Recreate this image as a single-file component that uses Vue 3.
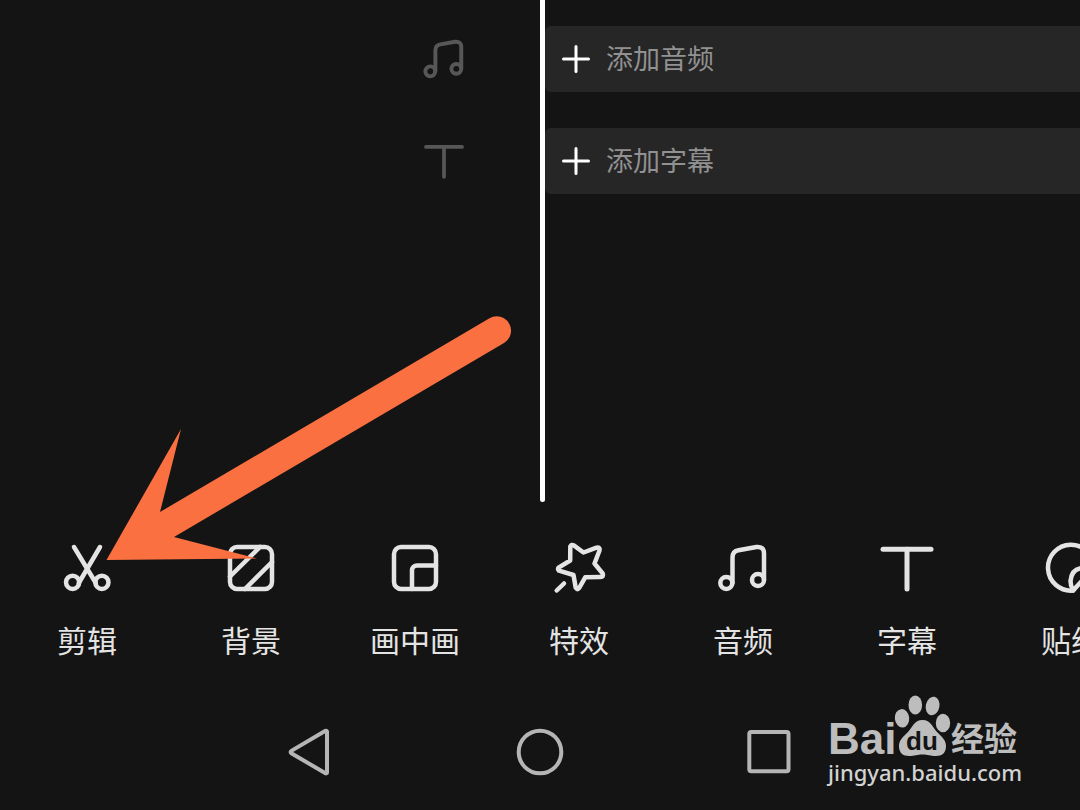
<template>
  <div class="editor">
    <main class="timeline">
      <div class="track-icons">
        <div v-for="track in tracks" :key="track.icon" class="track-icon">
          <svg :class="track.icon" viewBox="0 0 56 56" aria-hidden="true">
            <path v-for="d in icons[track.icon]" :key="d" :d="d" />
          </svg>
        </div>
      </div>
      <div class="playhead"></div>
      <div class="tracks">
        <button v-for="track in tracks" :key="track.label" type="button" class="track">
          <svg viewBox="0 0 30 30" aria-hidden="true"><path d="M15 2.5v25M2.5 15h25" /></svg>
          <span>{{ track.label }}</span>
        </button>
      </div>
    </main>

    <nav class="toolbar">
      <button v-for="tool in tools" :key="tool.label" type="button" class="tool">
        <svg :class="tool.icon" viewBox="0 0 56 56" aria-hidden="true">
          <path v-for="d in icons[tool.icon]" :key="d" :d="d" />
        </svg>
        <span>{{ tool.label }}</span>
      </button>
    </nav>

    <footer class="system-nav">
      <button type="button" aria-label="返回">
        <svg viewBox="0 0 56 56"><path d="M45 7.500v41a1 1 0 0 1-1.500.8L9.300 29.200a1.300 1.300 0 0 1 0-2.300L43.500 6.800a1 1 0 0 1 1.500.7z" /></svg>
      </button>
      <button type="button" aria-label="主屏幕">
        <svg viewBox="0 0 56 56"><circle cx="28" cy="28" r="21.3" /></svg>
      </button>
      <button type="button" aria-label="最近任务">
        <svg viewBox="0 0 56 56"><rect x="7.3" y="8.1" width="39.2" height="39.2" rx="2" /></svg>
      </button>
    </footer>

    <!-- Pointer to the edit tool -->
    <svg class="arrow" viewBox="106 316 406 246" aria-hidden="true">
      <path d="M106.500 560L181 429L160 512L489.500 318.300A14.200 14.200 0 0 1 504 343L174 537L257 558.500z" />
    </svg>

    <div class="watermark">
      <div class="brand">
        <span class="bai">Bai</span>
        <svg viewBox="0 0 58 64" aria-hidden="true">
          <ellipse cx="9" cy="23.3" rx="7.2" ry="9.2" transform="rotate(-6 9 23.3)" />
          <ellipse cx="22.3" cy="10" rx="6.8" ry="9.4" />
          <ellipse cx="39.6" cy="11" rx="6.8" ry="9.4" transform="rotate(12 39.6 11)" />
          <ellipse cx="50" cy="28" rx="7.2" ry="9.2" />
          <path d="M29.500 25C38 25 40 33 44 37C49 42 53 45 53 51C53 58 49 61 43 61C37 61 35 59.500 29.500 59.500C24 59.500 22 61 16 61C10 61 6 58 6 51C6 45 10 42 15 37C19 33 21 25 29.500 25z" />
          <text x="29" y="55" text-anchor="middle">du</text>
        </svg>
        <span class="jingyan">经验</span>
      </div>
      <a href="#">jingyan.baidu.com</a>
    </div>
  </div>
</template>

<script setup>
const tracks = [
  { icon: 'music', label: '添加音频' },
  { icon: 'text', label: '添加字幕' }
]

const tools = [
  { icon: 'scissors', label: '剪辑' },
  { icon: 'background', label: '背景' },
  { icon: 'pip', label: '画中画' },
  { icon: 'effect', label: '特效' },
  { icon: 'music', label: '音频' },
  { icon: 'text', label: '字幕' },
  { icon: 'sticker', label: '贴纸' }
]

const square = 'M14 7h28a7 7 0 0 1 7 7v28a7 7 0 0 1-7 7H14a7 7 0 0 1-7-7V14a7 7 0 0 1 7-7z'

const icons = {
  scissors: [
    'M15 7L36.800 43',
    'M41 7L19.800 43',
    'M7 42.300a6.600 6.600 0 1 0 13.200 0a6.600 6.600 0 1 0-13.200 0',
    'M36.300 42.300a6.600 6.600 0 1 0 13.200 0a6.600 6.600 0 1 0-13.200 0'
  ],
  background: [square, 'M37 7L7 36.500', 'M49 22L22 49'],
  pip: [square, 'M25 49V30.500a5 5 0 0 1 5-5h19'],
  effect: [
    'M19.300 6.500Q20.500 4 22.800 5.400L32.500 12.500L45.500 7.700Q49.500 7 48.500 10.500L43.500 23.500L51.700 33.500Q53 37 49.500 37L34.200 37.300L28.200 48Q26.300 50.500 24.700 47.700L22.500 35L8 30.700Q6 29 8 27.300L19.200 20.500z',
    'M13 43.500L5.700 50.500'
  ],
  music: [
    'M5.300 43a6 6 0 1 0 12 0a6 6 0 1 0-12 0',
    'M37 40a6 6 0 1 0 12 0a6 6 0 1 0-12 0',
    'M17.500 43V17.500Q17.500 11.200 23.500 10.200L41.500 7Q49 6.300 49 13.500V40'
  ],
  text: ['M4 9.300H52', 'M28 9.300V49'],
  sticker: [
    'M51 28A23 23 0 1 0 30 50.600Z',
    'M30 50.500Q27.500 46 27.500 41Q28.500 29 39 28H51'
  ]
}
</script>

<style>
body {
  background: #141414;
}
</style>

<style scoped>
.editor {
  position: relative;
  min-height: 100vh;
  overflow: hidden;
  background: #141414;
  color: #e4e4e4;
  font-family: "Liberation Sans", "Noto Sans CJK SC", sans-serif;
}

button {
  margin: 0;
  padding: 0;
  border: 0;
  background: none;
  color: inherit;
  font-family: "Noto Sans CJK SC", sans-serif;
}

svg {
  display: block;
  flex: none;
  fill: none;
  stroke: currentColor;
  stroke-linecap: round;
  stroke-linejoin: round;
}

.timeline {
  display: grid;
  grid-template-columns: 50% 5px 1fr;
  min-height: 502px;
}

.track-icons,
.tracks {
  display: flex;
  flex-direction: column;
  gap: 36px;
  padding-top: 26px;
}

.track-icons {
  align-items: flex-end;
  padding-right: 72px;
  color: #575757;
}

.track-icon {
  display: flex;
  align-items: center;
  justify-content: center;
  width: 48px;
  height: 66px;
}

.track-icon .music {
  width: 46px;
  height: 46px;
  stroke-width: 4.8;
}

.track-icon .text {
  width: 42px;
  height: 42px;
  stroke-width: 5;
}

.playhead {
  border-radius: 0 0 3px 3px;
  background: #fff;
}

.track {
  display: flex;
  align-items: center;
  gap: 15px;
  height: 66px;
  padding-left: 16px;
  border-radius: 6px 0 0 6px;
  background: #262626;
  color: #919191;
  font-size: 27px;
  line-height: 40px;
}

.track span {
  padding-bottom: 2px;
}

.track svg {
  width: 30px;
  height: 30px;
  stroke: #fff;
  stroke-width: 3;
}

.toolbar {
  display: flex;
  padding: 38px 0 0 5px;
}

.tool {
  display: flex;
  flex: 0 0 164px;
  flex-direction: column;
  align-items: center;
  gap: 23px;
  font-size: 30px;
  line-height: 40px;
}

.tool svg {
  width: 56px;
  height: 56px;
  stroke-width: 4.5;
}

.tool .text {
  stroke-width: 5;
}

.system-nav {
  display: flex;
  justify-content: center;
  padding: 65px 0 28px;
  color: #b5b5b5;
}

.system-nav button {
  display: flex;
  justify-content: center;
  width: 230px;
}

.system-nav svg {
  width: 56px;
  height: 56px;
  stroke-width: 4;
}

.arrow {
  position: absolute;
  top: 316px;
  left: 106px;
  width: 406px;
  height: 246px;
  fill: #fb7041;
  stroke: none;
  pointer-events: none;
}

.watermark {
  position: absolute;
  top: 695px;
  right: 58px;
  color: #bdbdbd;
}

.brand {
  display: flex;
  align-items: flex-end;
  height: 64px;
}

.brand svg {
  width: 58px;
  height: 64px;
  fill: currentColor;
  stroke: none;
}

.brand text {
  fill: #141414;
  font-size: 26px;
  font-weight: 700;
}

.bai {
  width: 65px;
  font-size: 44px;
  font-weight: 700;
  line-height: 40px;
}

.jingyan {
  font-family: "Noto Sans CJK SC", sans-serif;
  font-size: 33px;
  font-weight: 700;
  line-height: 44px;
}

.watermark a {
  display: block;
  color: #d2d2d2;
  font-family: "Noto Sans", sans-serif;
  font-size: 22px;
  font-weight: 500;
  line-height: 26px;
  text-decoration: none;
}
</style>
